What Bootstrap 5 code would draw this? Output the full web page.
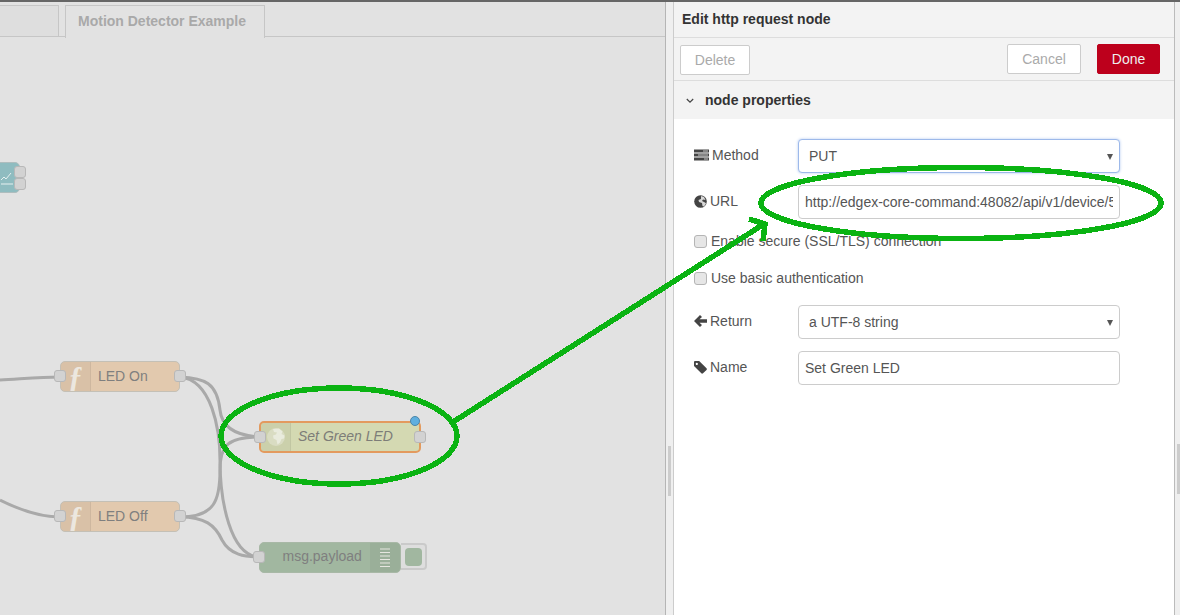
<!DOCTYPE html>
<html lang="en">
<head>
    <meta charset="UTF-8">
    <title>Edit http request node</title>
    <link href="https://cdn.jsdelivr.net/npm/bootstrap@5.3.0/dist/css/bootstrap.min.css" rel="stylesheet">
    <style>
        html, body { height: 100%; overflow: hidden; }
        body {
            font-family: "Liberation Sans", Arial, sans-serif;
            font-size: 14px;
            color: #555;
            background: #fff;
        }
        .app-shell { width: 1180px; height: 615px; border-top: 2px solid #666; position: relative; }
        .flow-area { width: 666px; background: #e2e2e2; border-right: 1px solid #b5b5b5; position: relative; overflow: hidden; }
        .tab-strip { height: 35px; border-bottom: 1px solid #c6c6c6; padding-top: 3px; gap: 6px; }
        .tab-off { width: 59px; background: #dedede; border: 1px solid #c6c6c6; border-left: 0; height: 32px; }
        .tab-on {
            width: 200px; height: 33px; background: #e2e2e2; border: 1px solid #c6c6c6; border-bottom: 0;
            font-weight: 700; color: #a9a9a9; padding: 5px 0 0 12px; line-height: 20px;
        }
        .side-sep { width: 8px; background: #efefef; border-right: 1px solid #ccc; position: relative; }
        .side-grip { position: absolute; left: 2px; top: 444px; width: 3px; height: 50px; background: #ccc; }
        .tray { width: 501px; border-right: 1px solid #bbb; }
        .tray-title { height: 36px; background: #f3f3f3; border-bottom: 1px solid #ddd; color: #333; font-weight: 700; padding: 9px 0 0 8px; line-height: 17px; }
        .tray-toolbar { height: 43px; background: #f3f3f3; border-bottom: 1px solid #ddd; padding: 6px 14px 0 6px; }
        .btn-tray {
            background: #fff; border: 1px solid #ccc; border-radius: 2px; color: #aaa; font-size: 14px;
            height: 30px; padding: 0; line-height: 28px;
        }
        .btn-delete { width: 70px; margin-top: 1px; }
        .btn-cancel { width: 74px; margin-right: 16px; }
        .btn-done { width: 63px; background: #bd001c; border-color: #bd001c; color: #eee; }
        .section-head { height: 38px; background: #f3f3f3; color: #333; font-weight: 700; padding: 11px 0 0 12px; line-height: 17px; gap: 11px; }
        .form-pane { padding: 20px 0 0 20px; }
        .prop-row { display: flex; align-items: flex-start; margin-bottom: 12px; }
        .prop-label { width: 104px; flex: none; padding-top: 6px; line-height: 20px; display: flex; align-items: center; gap: 3px; }
        .prop-label svg { flex: none; }
        .prop-input {
            width: 322px; height: 34px; border: 1px solid #ccc; border-radius: 4px; padding: 0 6px;
            line-height: 32px; color: #555; background: #fff; overflow: hidden; white-space: nowrap; position: relative;
        }
        .prop-input.is-select { padding-left: 10px; }
        .prop-input.is-select::after {
            content: ""; position: absolute; right: 6px; top: 14px;
            border-left: 3px solid transparent; border-right: 3px solid transparent; border-top: 6px solid #555;
        }
        .prop-input.is-focus { border-color: #9db9ea; box-shadow: 0 0 3px #b3c9f0; }
        .url-clip { display: block; width: 308px; overflow: hidden; }
        .check-row { display: flex; align-items: center; gap: 4px; height: 20px; margin-bottom: 17px; line-height: 20px; }
        .check-box { width: 13px; height: 13px; border: 1px solid #b5b5b5; border-radius: 3px; background: #e6e6e6; flex: none; }

        .wire-layer { position: absolute; left: 0; top: -2px; width: 666px; height: 615px; }
        .flow-node { position: absolute; height: 31px; border: 1px solid #c4c0b6; border-radius: 5px; line-height: 27px; color: #7f7f7f; }
        .node-icon { position: absolute; left: 0; top: 0; bottom: 0; width: 30px; background: rgba(0,0,0,.04); border-right: 1px solid rgba(0,0,0,.05); border-radius: 4px 0 0 4px; color: #ece7df; font-family: "Liberation Serif", serif; font-style: italic; font-weight: 700; font-size: 29px; text-align: center; line-height: 28px; }
        .node-label { position: absolute; left: 38px; top: 0; white-space: nowrap; }
        .node-port { position: absolute; width: 12px; height: 12px; background: #d2d2d2; border: 1px solid #b8b8b8; border-radius: 3px; top: 8px; }
        .port-in { left: -7px; }
        .port-out { right: -7px; }
        .fn-node { background: #e2c9ae; width: 120px; line-height: 29px; }
        .fn-node .node-label { left: 37px; }
        .http-node { background: #d4d9b2; width: 162px; border: 2px solid #e39a5e; height: 32px; font-style: italic; color: #7d7d78; }
        .http-node .node-label { left: 37px; }
        .debug-node { background: #a1b7a0; width: 142px; border-color: #a8b8a6; font-size: 14px; }
        .dot-changed { position: absolute; left: 149px; top: -7px; width: 10px; height: 10px; border-radius: 50%; background: #5fafdf; border: 1px solid #4c86a8; }
        .debug-tab { position: absolute; left: 401px; top: 541px; width: 26px; height: 27px; background: #dedede; border: 2px solid #cacaca; border-left: 0; border-radius: 0 4px 4px 0; }
        .debug-knob { position: absolute; left: 4px; top: 3px; width: 17px; height: 18px; background: #a1b7a0; border-radius: 4px; }
        .chart-node { background: #8fbcc0; width: 27px; height: 31px; left: -7px; top: 160px; border-color: #aebdbe; }
        .chart-glyph { position: absolute; left: 7px; top: 6px; }
        .overlay-layer { position: absolute; left: 0; top: -2px; width: 1180px; height: 615px; pointer-events: none; }
        .tray-rest { background: #efefef; }
        .tray-grip { position: absolute; left: 2px; top: 442px; width: 3px; height: 50px; background: #ccc; }
    </style>
</head>
<body>
<div class="app-shell d-flex">
    <div class="flow-area flex-shrink-0">
        <div class="tab-strip d-flex">
            <div class="tab-off"></div>
            <div class="tab-on">Motion Detector Example</div>
        </div>
        <svg class="wire-layer" viewBox="0 0 666 615">
            <g fill="none" stroke="#a9a9a9" stroke-width="3">
                <path d="M0 380C20 379 40 377 60 377"/>
                <path d="M0 500C20 510 40 517 60 517"/>
                <path d="M180 377C205 378 217 383 220 410C222 430 240 436 260 437"/>
                <path d="M180 377C212 380 220 430 220 460C220 500 230 557 260 557"/>
                <path d="M180 517C215 517 220 500 220 470C220 445 228 437 260 437"/>
                <path d="M180 517C205 517 215 525 222 540C230 555 245 557 260 557"/>
            </g>
        </svg>
        <div class="flow-node chart-node">
            <svg class="chart-glyph" width="13" height="17" viewBox="0 0 13 17"><path d="M0 11l3-3 2 2 5-6M0 15h12" fill="none" stroke="#e6f0f0" stroke-width="1"/></svg>
            <span class="node-port port-out" style="top:3px"></span>
            <span class="node-port port-out" style="top:15px"></span>
        </div>
        <div class="flow-node fn-node" style="left:60px;top:359px"><span class="node-icon">ƒ</span><span class="node-label">LED On</span><span class="node-port port-in"></span><span class="node-port port-out"></span></div>
        <div class="flow-node fn-node" style="left:60px;top:499px"><span class="node-icon">ƒ</span><span class="node-label">LED Off</span><span class="node-port port-in"></span><span class="node-port port-out"></span></div>
        <div class="flow-node http-node" style="left:259px;top:419px">
            <span class="node-icon">
                <svg width="20" height="20" viewBox="0 0 20 20" style="margin-top:4px;display:block;margin-left:5px"><circle cx="10" cy="10" r="9" fill="#d9dcc2"/><path d="M7 2l6-.5 3.500 3-1 2.500 3 1.500-.5 3-2.500.5-1.500 3.500-2.500 2-1-4.500-3-1.500-.5-3 3-1 1-2-3-.5z" fill="#e9ebdd"/></svg>
            </span>
            <span class="node-label">Set Green LED</span>
            <span class="node-port port-in" style="left:-7px;top:8px"></span><span class="node-port port-out" style="right:-7px;top:8px"></span>
            <span class="dot-changed"></span>
        </div>
        <div class="flow-node debug-node" style="left:259px;top:540px">
            <span class="node-label" style="left:22.500px">msg.payload</span>
            <span class="node-port port-in"></span>
            <span style="position:absolute;right:0;top:0;bottom:0;width:30px;background:rgba(0,0,0,.04);border-radius:0 4px 4px 0"></span>
            <svg width="10" height="20" viewBox="0 0 10 20" style="position:absolute;left:120px;top:5px"><path d="M0 1h10M0 4.500h10M0 8h10M0 11.500h10M0 15h10M0 18.500h10" stroke="#e6e6e0" stroke-width="1"/></svg>
        </div>
        <div class="debug-tab"><span class="debug-knob"></span></div>
    </div>
    <div class="side-sep flex-shrink-0"><span class="side-grip"></span></div>
    <div class="tray flex-shrink-0">
        <div class="tray-title">Edit http request node</div>
        <div class="tray-toolbar d-flex">
            <button class="btn-tray btn-delete" type="button">Delete</button>
            <div class="ms-auto d-flex">
                <button class="btn-tray btn-cancel" type="button">Cancel</button>
                <button class="btn-tray btn-done" type="button">Done</button>
            </div>
        </div>
        <div class="section-head d-flex align-items-start">
            <svg width="8" height="6" viewBox="0 0 8 6" style="margin-top:6px"><path d="M.8 1l3.200 3.200L7.200 1" fill="none" stroke="#444" stroke-width="1.200"/></svg>
            <span>node properties</span>
        </div>
        <div class="form-pane">
            <div class="prop-row">
                <div class="prop-label">
                    <svg width="15" height="12" viewBox="0 0 15 12"><path d="M0 .5h15v3H0zM0 4.500h15v3H0zM0 8.500h15v3H0z" fill="#444"/><path d="M9 2h5M4 6h10M10 10h4" stroke="#fff" stroke-width=".7"/></svg>
                    <span>Method</span>
                </div>
                <div class="prop-input is-select is-focus">PUT</div>
            </div>
            <div class="prop-row">
                <div class="prop-label">
                    <svg width="13" height="13" viewBox="0 0 13 13"><circle cx="6.500" cy="6.500" r="6.300" fill="#444"/><path d="M7 1l3 1 1.500 3-2.500-.5-1 1.500 3 1.500 1 1-2 3-1.500-.5-.5-3-3-1-.5-2L7 4z" fill="#d8d8d8"/></svg>
                    <span>URL</span>
                </div>
                <div class="prop-input"><span class="url-clip">http://edgex-core-command:48082/api/v1/device/5</span></div>
            </div>
            <div class="check-row"><span class="check-box"></span><span>Enable secure (SSL/TLS) connection</span></div>
            <div class="check-row"><span class="check-box"></span><span>Use basic authentication</span></div>
            <div class="prop-row">
                <div class="prop-label">
                    <svg width="13" height="12" viewBox="0 0 13 12"><path d="M6 0L0 6l6 6 2-2-2.500-2.300H13V4.300H5.500L8 2z" fill="#444"/></svg>
                    <span>Return</span>
                </div>
                <div class="prop-input is-select">a UTF-8 string</div>
            </div>
            <div class="prop-row">
                <div class="prop-label">
                    <svg width="13" height="13" viewBox="0 0 13 13"><path fill-rule="evenodd" d="M0 1.200C0 .5.500 0 1.200 0h4L12.500 7.300c.5.500.5 1.200 0 1.700L9 12.300c-.5.500-1.200.5-1.700 0L0 5zM2.800 1.800a1.100 1.100 0 1 0 .01 0z" fill="#444"/></svg>
                    <span>Name</span>
                </div>
                <div class="prop-input">Set Green LED</div>
            </div>
        </div>
    </div>
    <div class="tray-rest flex-grow-1 position-relative"><span class="tray-grip"></span></div>

    <svg class="overlay-layer" viewBox="0 0 1180 615">
        <g fill="none" stroke="#0ab312" stroke-width="5.500" shape-rendering="crispEdges">
            <ellipse cx="339" cy="436" rx="118" ry="48"/>
            <ellipse cx="961" cy="203" rx="200" ry="35.500"/>
            <path d="M453 422L764 224"/>
            <path d="M749 219L765 224L763 241"/>
        </g>
    </svg>
</div>
<script src="https://cdn.jsdelivr.net/npm/bootstrap@5.3.0/dist/js/bootstrap.bundle.min.js"></script>
</body>
</html>
